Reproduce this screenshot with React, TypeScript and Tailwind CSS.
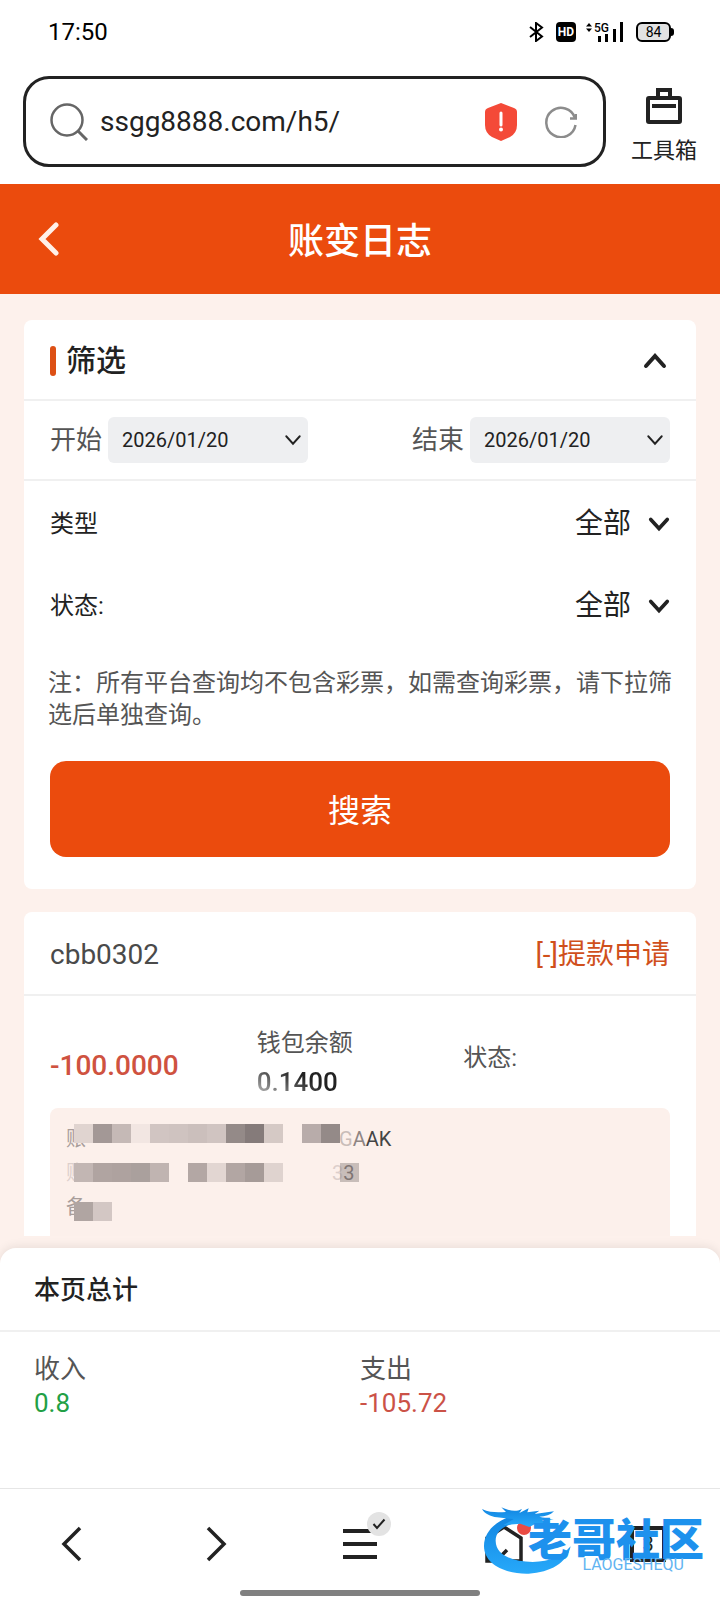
import type { ReactNode } from "react";

const tileRows = [
  [
    "bg-[#e0d4d0]",
    "bg-[#a39896]",
    "bg-[#c5b9b6]",
    "bg-[#f2e6e2]",
    "bg-[#d1c5c2]",
    "bg-[#cfc3c0]",
    "bg-[#cbbfbc]",
    "bg-[#d0c4c1]",
    "bg-[#948a88]",
    "bg-[#857b7a]",
    "bg-[#d5c9c5]",
    "bg-transparent",
    "bg-[#b8acaa]",
    "bg-[#948a88]",
  ],
  [
    "bg-[#c2b6b3]",
    "bg-[#b0a4a1]",
    "bg-[#aea29f]",
    "bg-[#aaa09d]",
    "bg-[#c0b4b1]",
    "bg-transparent",
    "bg-[#b3a7a4]",
    "bg-[#e2d6d2]",
    "bg-[#b2a6a3]",
    "bg-[#a69b98]",
    "bg-[#dfd3cf]",
    "bg-transparent",
    "bg-transparent",
    "bg-transparent",
    "bg-[#948a88]/50",
  ],
  ["bg-[#b0a5a2]", "bg-[#d3c7c4]"],
];

const Chevron = ({ className, width = 4 }: { className?: string; width?: number }) => (
  <svg
    viewBox="0 0 24 16"
    fill="none"
    stroke="currentColor"
    strokeWidth={width}
    strokeLinecap="round"
    className={className}
  >
    <path d="M3 3 L12 13 L21 3" />
  </svg>
);

const StatusBar = () => (
  <div className="flex h-16 items-center justify-between pr-[46px] pl-12">
    <time className="text-2xl text-black">17:50</time>
    <div className="flex items-center text-black">
      <svg viewBox="0 0 16 20" className="h-5 w-4" fill="none" stroke="currentColor" strokeWidth="2">
        <path d="M2 5 L14 14.500 L8 19 V1 L14 5.500 L2 15" />
      </svg>
      <span className="ml-3 flex h-5 w-5 items-center justify-center rounded bg-black text-xs font-bold text-white">
        HD
      </span>
      <svg viewBox="0 0 38 20" className="ml-2.5 h-5 w-[38px]" fill="currentColor">
        <path d="M0 4.500 L3 1 L6 4.500 Z M0 6.500 L3 10 L6 6.500 Z" />
        <text x="8" y="10" fontSize="12" fontWeight="500">
          5G
        </text>
        <path d="M12 14 h3 v6 h-3 Z M19 12 h3 v8 h-3 Z M27 7 h3 v13 h-3 Z M34 0 h3 v20 h-3 Z" />
      </svg>
      <span className="ml-3 flex h-5 w-[35px] items-center justify-center rounded-md border-2 border-black bg-[#e2e2e2] text-sm">
        84
      </span>
      <span className="h-2 w-[3px] rounded-r bg-black" />
    </div>
  </div>
);

const AddressBar = () => (
  <div className="flex items-center gap-[25px] pt-3 pr-[23px] pb-[17px] pl-[23px]">
    <div className="flex h-[91px] min-w-0 flex-1 items-center rounded-[26px] border-3 border-[#222] pr-[26px] pl-6">
      <svg viewBox="0 0 38 38" className="size-[38px] shrink-0" fill="none" stroke="#666" strokeWidth="2.500">
        <circle cx="17" cy="17" r="15.500" />
        <path d="M28 28 L37 37" strokeWidth="3" />
      </svg>
      <input
        aria-label="网址"
        defaultValue="ssgg8888.com/h5/"
        className="ml-3 h-12 min-w-0 flex-1 bg-transparent text-[28px] text-[#222] outline-none"
      />
      <button aria-label="安全提示">
        <svg viewBox="0 0 32 38" className="h-[38px] w-8">
          <path
            d="M16 0 L29 5 Q32 6 32 9 V22 Q32 30 25 34 L16 38 L7 34 Q0 30 0 22 V9 Q0 6 3 5 Z"
            fill="#f44a38"
          />
          <path d="M16 10 V22" stroke="#fff" strokeWidth="3" strokeLinecap="round" />
          <circle cx="16" cy="26.500" r="2" fill="#fff" />
        </svg>
      </button>
      <button aria-label="刷新" className="ml-7">
        <svg viewBox="0 0 32 32" className="size-8" fill="none" stroke="#8c8c8c" strokeWidth="2.500">
          <path d="M30.500 19 A14.700 14.700 0 1 1 30 12" />
          <path d="M31 8 V12.500 H25" />
        </svg>
      </button>
    </div>
    <button className="flex flex-col items-center gap-[11px] text-[22px] leading-8 text-[#222]">
      <svg viewBox="0 0 36 36" className="mt-3 size-9" fill="none" stroke="currentColor" strokeWidth="4">
        <rect x="2" y="10" width="32" height="24" rx="1" />
        <path d="M12 10 V2 H24 V10 M6 18 H30" />
      </svg>
      工具箱
    </button>
  </div>
);

const DateField = ({ id, label }: { id: string; label: string }) => (
  <div className="flex items-center gap-[6px]">
    <label htmlFor={id} className="text-[26px] text-[#555]">
      {label}
    </label>
    <div className="relative">
      <select
        id={id}
        className="h-[46px] w-[200px] appearance-none rounded-md bg-[#eeeff1] pl-3.5 text-xl text-[#222] outline-none"
      >
        <option>2026/01/20</option>
      </select>
      <Chevron width={2.5} className="pointer-events-none absolute top-4 right-1.5 h-3.5 w-[18px] text-[#222]" />
    </div>
  </div>
);

const SelectRow = ({ id, label }: { id: string; label: string }) => (
  <div className="flex h-[82px] items-center px-[26px] pt-1 text-[#222]">
    <label htmlFor={id} className="flex-1 text-2xl">
      {label}
    </label>
    <select id={id} className="appearance-none bg-transparent text-[28px] outline-none">
      <option>全部</option>
    </select>
    <Chevron className="ml-4 h-4 w-[22px]" />
  </div>
);

const FilterCard = () => (
  <section className="rounded-lg bg-white pb-8">
    <div className="flex h-[81px] items-center border-b-2 border-[#f0f0f0] px-[26px] pt-0.5">
      <span className="h-[30px] w-1.5 rounded-full bg-[#dd5015]" />
      <h2 className="ml-2.5 flex-1 text-[30px] font-medium text-[#222]">筛选</h2>
      <button aria-label="收起" className="text-[#222]">
        <Chevron className="h-4 w-[30px] rotate-180" />
      </button>
    </div>
    <div className="flex h-20 items-center justify-between border-b-2 border-[#f0f0f0] px-[26px]">
      <DateField id="start" label="开始" />
      <DateField id="end" label="结束" />
    </div>
    <SelectRow id="type" label="类型" />
    <SelectRow id="status" label="状态:" />
    <p className="mt-[22px] px-6 text-2xl leading-8 text-[#555]">
      注：所有平台查询均不包含彩票，如需查询彩票，请下拉筛选后单独查询。
    </p>
    <div className="mt-[30px] px-[26px]">
      <button className="h-24 w-full rounded-2xl bg-[#eb4b0d] pt-1 text-[32px] text-white">搜索</button>
    </div>
  </section>
);

const RecordCard = () => (
  <section className="rounded-t-lg bg-white px-[26px]">
    <div className="-mx-[26px] flex h-[84px] items-center justify-between border-b-2 border-[#f0f0f0] px-[26px] pt-1 text-[28px]">
      <span className="text-[#4a4a4a]">cbb0302</span>
      <span className="text-[#d0501c]">[-]提款申请</span>
    </div>
    <div className="grid h-28 grid-cols-3 pt-7">
      <span className="pt-[22px] text-[28px] leading-10 font-medium text-[#cf5240]">-100.0000</span>
      <div className="flex flex-col text-[#555]">
        <span className="text-2xl leading-[38px]">钱包余额</span>
        <span className="w-fit bg-gradient-to-tr from-[#ddd] to-[#222] to-60% bg-clip-text text-[26px] leading-10 font-medium text-transparent">
          0.1400
        </span>
      </div>
      <span className="pt-3.5 text-2xl leading-10 text-[#555]">状态:</span>
    </div>
    <div className="relative h-32 rounded-t-lg bg-[#fcf0eb] px-4 pt-3.5 text-xl leading-[34px] text-[#a89d9a]">
      <p className="flex">
        <span className="w-[273px]">账</span>
        <span className="text-[#c9bdb9]">G</span>
        <span className="text-[#8f8583]">A</span>
        <span className="text-[#444]">AK</span>
      </p>
      <p className="flex">
        <span className="w-[266px] text-[#dccfcb]">账</span>
        <span className="text-[#dccfcb]">3</span>
        <span className="text-[#6a605f]">3</span>
      </p>
      <p>备</p>
      <div className="absolute top-4 left-6 flex flex-col gap-5">
        {tileRows.map((row, i) => (
          <div key={i} className="flex">
            {row.map((tile, j) => (
              <span key={j} className={`size-[19px] ${tile}`} />
            ))}
          </div>
        ))}
      </div>
    </div>
  </section>
);

const Summary = () => (
  <section className="rounded-t-2xl bg-white pb-[68px] shadow-[0_-2px_10px_rgba(0,0,0,0.08)]">
    <h2 className="flex h-21 items-center border-b-2 border-[#f0f0f0] px-[34px] pt-0.5 text-[26px] font-medium text-[#222]">
      本页总计
    </h2>
    <dl className="grid grid-cols-2 pt-5 text-[26px] leading-[34px] text-[#555]">
      <div className="pl-[34px]">
        <dt>收入</dt>
        <dd className="text-[#22a045]">0.8</dd>
      </div>
      <div>
        <dt>支出</dt>
        <dd className="text-[#cb5247]">-105.72</dd>
      </div>
    </dl>
  </section>
);

const NavButton = ({ label, children }: { label: string; children: ReactNode }) => (
  <button aria-label={label} className="flex h-10 items-center justify-center text-[#222]">
    {children}
  </button>
);

const Watermark = () => (
  <div className="pointer-events-none absolute top-4 right-4 flex">
    <svg viewBox="0 0 270 210" className="h-[70px] w-[90px]">
      <defs>
        <linearGradient id="dragon" x1="0" y1="0" x2="0" y2="1">
          <stop offset="0" stopColor="#1184e0" />
          <stop offset="1" stopColor="#27a9fa" />
        </linearGradient>
      </defs>
      <g fill="url(#dragon)">
        <path d="M118 26 C50 38 7 75 6 122 C5 178 70 208 140 206 C205 202 255 175 266 124 C240 154 205 170 152 171 C90 170 42 150 41 108 C40 78 70 56 130 48 Z" />
        <path d="M0 12 C25 24 50 22 72 21 L58 7 C82 17 100 22 120 12 L112 24 L140 10 L136 22 L172 17 L158 27 L216 19 C205 31 190 34 172 35 L215 45 L180 45 L205 55 L165 54 L142 66 L115 56 L65 60 L95 42 L45 37 C25 34 8 26 0 12 Z" />
      </g>
    </svg>
    <div className="-ml-11 flex flex-col items-end pt-[18px]">
      <span className="text-[44px] leading-[36px] font-black text-[#1d91ed]">老哥社区</span>
      <span className="pr-5 text-base leading-3 text-[#62b4f1]">LAOGESHEQU</span>
    </div>
  </div>
);

const BottomNav = () => (
  <nav className="relative border-t border-[#e6e6e6] bg-white pt-[35px] pb-1">
    <div className="grid grid-cols-5">
      <NavButton label="后退">
        <svg viewBox="0 0 22 36" className="h-9 w-[22px]" fill="none" stroke="currentColor" strokeWidth="3.500">
          <path d="M19 2 L3 18 L19 34" />
        </svg>
      </NavButton>
      <NavButton label="前进">
        <svg viewBox="0 0 22 36" className="h-9 w-[22px]" fill="none" stroke="currentColor" strokeWidth="3.500">
          <path d="M3 2 L19 18 L3 34" />
        </svg>
      </NavButton>
      <NavButton label="菜单">
        <span className="relative">
          <svg viewBox="0 0 34 32" className="h-8 w-[34px]" stroke="currentColor" strokeWidth="4">
            <path d="M0 3 H34 M0 16 H34 M0 29 H34" />
          </svg>
          <span className="absolute -top-4 -right-3.5 flex size-6 items-center justify-center rounded-full bg-[#e3e3e3]">
            <svg viewBox="0 0 14 12" className="h-3 w-3.5" fill="none" stroke="currentColor" strokeWidth="2">
              <path d="M1.500 6 L5 10 L12.500 1.500" />
            </svg>
          </span>
        </span>
      </NavButton>
      <NavButton label="主页">
        <span className="relative">
          <svg viewBox="0 0 38 38" className="size-[38px]" fill="none" stroke="currentColor" strokeWidth="3.500">
            <path d="M28 36 H36 V13 L19 2 L2 13 V36 H11 L22 25" />
          </svg>
          <span className="absolute -top-1 -right-2 size-3.5 rounded-full bg-[#ea4b43]" />
        </span>
      </NavButton>
      <NavButton label="标签页">
        <span className="flex size-9 items-center justify-center border-4 border-[#222] text-xl">3</span>
      </NavButton>
    </div>
    <div className="mx-auto mt-[26px] h-1.5 w-1/3 rounded-full bg-[#808080]" />
    <Watermark />
  </nav>
);

const App = () => {
  return (
    <div className="bg-white font-['Roboto','Noto_Sans_CJK_SC',sans-serif]" lang="zh-CN">
      <StatusBar />
      <AddressBar />
      <header className="grid h-[110px] grid-cols-3 items-center bg-[#eb4b0d] text-white">
        <button aria-label="返回" className="ml-9 w-fit">
          <svg
            viewBox="0 0 24 36"
            className="h-9 w-6"
            fill="none"
            stroke="#fff0e8"
            strokeWidth="5"
            strokeLinecap="round"
          >
            <path d="M20 4 L6 18 L20 32" />
          </svg>
        </button>
        <h1 className="pt-1.5 text-center text-4xl font-medium">账变日志</h1>
      </header>
      <main className="flex flex-col gap-[23px] bg-[#fdf1ec] px-6 pt-[26px] pb-3">
        <FilterCard />
        <RecordCard />
      </main>
      <div className="bg-[#fdf1ec]">
        <Summary />
      </div>
      <BottomNav />
    </div>
  );
};

export default App;
